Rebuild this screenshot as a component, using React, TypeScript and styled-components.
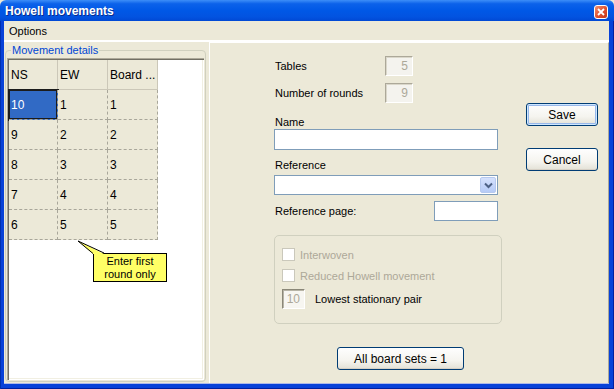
import React from "react";
import styled, { createGlobalStyle } from "styled-components";

const GlobalStyle = createGlobalStyle`
  html, body {
    margin: 0;
    padding: 0;
    overflow: hidden;
    background: #ECE9D8;
  }
  * {
    box-sizing: border-box;
  }
`;

const Window = styled.div`
  width: 614px;
  height: 389px;
  display: flex;
  flex-direction: column;
  font-family: "Liberation Sans", Arial, sans-serif;
  font-size: 11px;
  color: #000;
`;

const TitleBar = styled.div`
  height: 21px;
  display: flex;
  align-items: center;
  justify-content: space-between;
  padding: 0 6px 0 5px;
  background: linear-gradient(
    #3d8ef8 0%,
    #0c62ea 18%,
    #0058e6 50%,
    #0253e0 80%,
    #0048d4 100%
  );
  border-radius: 6px 6px 0 0;
`;

const Title = styled.span`
  color: #fff;
  font-weight: bold;
  font-size: 12px;
  text-shadow: 1px 1px 0 #0a2c8c;
`;

const CloseButton = styled.div`
  width: 14px;
  height: 14px;
  margin-top: 2px;
  border: 1px solid #fff;
  border-radius: 3px;
  background: linear-gradient(135deg, #f09070 0%, #e0502e 55%, #c0381c 100%);
  display: flex;
  align-items: center;
  justify-content: center;
`;

const Frame = styled.div`
  flex: 1;
  display: flex;
  flex-direction: column;
  background: #0842d8;
  border-left: 1px solid #0030b0;
  border-right: 1px solid #0020a0;
  padding: 0 4px 5px 3px;
  box-shadow: inset 0 -1px 0 #0020a0;
`;

const Client = styled.div`
  flex: 1;
  display: flex;
  flex-direction: column;
  background: #ece9d8;
  border-bottom: 1px solid #aeb9e8;
`;

const MenuBar = styled.div`
  height: 21px;
  display: flex;
  align-items: center;
  padding-left: 5px;
  font-size: 11px;
  border-bottom: 2px solid #fff;
`;

const Body = styled.div`
  flex: 1;
  display: flex;
`;

const LeftPane = styled.fieldset`
  margin: 1px 0 1px 1px;
  width: 201px;
  border: 1px solid #d0d0bf;
  border-radius: 4px;
  display: flex;
  flex-direction: column;
  padding: 0 1px 1px 1px;
`;

const Legend = styled.legend`
  color: #0046d5;
  font-size: 11px;
  padding: 0 1px;
  margin-left: 4px;
  line-height: 14px;
`;

const GridBox = styled.div`
  position: relative;
  flex: 1;
  background: #fff;
  box-shadow: inset 1px 1px 0 #aca899, inset 2px 2px 0 #716f64,
    inset -1px -1px 0 #fff, inset -2px -2px 0 #f1efe2;
  padding: 2px;
  margin-top: 1px;
`;

const Table = styled.div`
  display: grid;
  grid-template-columns: 49px 50px 50px;
  grid-auto-rows: 30px;
  width: 149px;
`;

const HeaderCell = styled.div`
  background: #ece9d8;
  border-right: 1px solid #cbc7b8;
  border-bottom: 1px solid #cbc7b8;
  display: flex;
  align-items: center;
  padding-left: 2px;
  font-size: 12px;
  white-space: nowrap;
  overflow: hidden;
`;

const Cell = styled.div<{ $selected?: boolean }>`
  background: ${(p) => (p.$selected ? "#316ac5" : "#ece9d8")};
  color: ${(p) => (p.$selected ? "#fff" : "#000")};
  border-right: 1px dashed #a8a69a;
  border-bottom: 1px dashed #a8a69a;
  box-shadow: ${(p) => (p.$selected ? "0 0 0 1px #1c1c1c, inset 0 0 0 1px #1c1c1c" : "none")};
  position: relative;
  display: flex;
  align-items: center;
  padding-left: 2px;
  font-size: 12px;
`;

const Callout = styled.div`
  position: absolute;
  left: 86px;
  top: 195px;
  width: 74px;
  height: 29px;
  background: #ffff66;
  border: 1px solid #000;
  display: flex;
  flex-direction: column;
  align-items: center;
  justify-content: center;
  font-size: 11px;
  line-height: 13px;
`;

const CalloutTail = styled.svg`
  position: absolute;
  left: 70px;
  top: 182px;
  overflow: visible;
`;

const RightPane = styled.div`
  flex: 1;
  display: flex;
  margin-left: 3px;
  border-left: 1px solid #fff;
  border-top: 1px solid #fff;
  border-right: 1px solid #aca899;
  padding: 13px 0 0 64px;
`;

const Form = styled.div`
  width: 228px;
  display: flex;
  flex-direction: column;
`;

const Row = styled.div<{ $top?: number; $width?: number }>`
  display: flex;
  align-items: center;
  justify-content: space-between;
  height: 20px;
  width: ${(p) => p.$width ?? 139}px;
  margin-top: ${(p) => p.$top ?? 0}px;
`;

const Label = styled.div<{ $top?: number; $muted?: boolean }>`
  font-size: 11px;
  line-height: 14px;
  padding-left: 1px;
  margin-top: ${(p) => p.$top ?? 0}px;
  color: ${(p) => (p.$muted ? "#aca899" : "#000")};
  white-space: nowrap;
`;

const SunkenBox = styled.div<{ $width: number }>`
  width: ${(p) => p.$width}px;
  height: 20px;
  background: #f4f3ee;
  border-top: 1px solid #aca899;
  border-left: 1px solid #aca899;
  border-right: 1px solid #fff;
  border-bottom: 1px solid #fff;
  box-shadow: inset 1px 1px 0 #dad7ca;
  color: #aca899;
  font-size: 12px;
  text-align: right;
  padding-right: 4px;
  line-height: 18px;
`;

const DeepBox = styled(SunkenBox)`
  border-top: 1px solid #8a8778;
  border-left: 1px solid #8a8778;
  box-shadow: inset 1px 1px 0 #b7b4a6;
  background: #f7f6f1;
`;

const TextInput = styled.div<{ $width: number; $height?: number; $top?: number }>`
  width: ${(p) => p.$width}px;
  height: ${(p) => p.$height ?? 20}px;
  margin-top: ${(p) => p.$top ?? 0}px;
  background: #fff;
  border: 1px solid #7f9db9;
  display: flex;
  justify-content: flex-end;
  align-items: center;
  padding-right: 1px;
`;

const DropButton = styled.div`
  width: 16px;
  height: 16px;
  border-radius: 2px;
  background: linear-gradient(#d5e1fd, #b6cbf7);
  border: 1px solid #b6c9ef;
  display: flex;
  align-items: center;
  justify-content: center;
`;

const OptionsGroup = styled.div`
  margin-top: 14px;
  width: 228px;
  height: 89px;
  border: 1px solid #d0d0bf;
  border-radius: 5px;
  padding: 12px 0 0 7px;
  display: flex;
  flex-direction: column;
`;

const CheckRow = styled.div<{ $top?: number }>`
  display: flex;
  align-items: center;
  gap: 4px;
  height: 13px;
  margin-top: ${(p) => p.$top ?? 0}px;
`;

const CheckBox = styled.div`
  width: 13px;
  height: 13px;
  border: 1px solid #cac8bb;
  background: #fff;
`;

const PairRow = styled.div`
  display: flex;
  align-items: center;
  gap: 9px;
  margin-top: 7px;
`;

const PushButton = styled.div<{ $default?: boolean; $width: number; $top?: number; $left?: number }>`
  width: ${(p) => p.$width}px;
  height: 23px;
  margin-top: ${(p) => p.$top ?? 0}px;
  margin-left: ${(p) => p.$left ?? 0}px;
  border: 1px solid #003c74;
  border-radius: 3px;
  background: linear-gradient(#fefefe 0%, #f5f4ef 60%, #e3e1d6 100%);
  box-shadow: ${(p) =>
    p.$default
      ? "inset 0 0 0 1px #cee7ff, inset 0 0 0 2px #98b8ea"
      : "inset 0 -1px 0 #d6d0c5"};
  display: flex;
  align-items: center;
  justify-content: center;
  font-size: 12px;
`;

const ButtonColumn = styled.div`
  display: flex;
  flex-direction: column;
  margin-left: 24px;
  padding-top: 47px;
`;

const rows = [
  ["10", "1", "1"],
  ["9", "2", "2"],
  ["8", "3", "3"],
  ["7", "4", "4"],
  ["6", "5", "5"],
];

export default function App() {
  return (
    <>
      <GlobalStyle />
      <Window>
        <TitleBar>
          <Title>Howell movements</Title>
          <CloseButton>
            <svg width="8" height="8" viewBox="0 0 8 8">
              <path d="M1 1 L7 7 M7 1 L1 7" stroke="#fff" strokeWidth="1.8" />
            </svg>
          </CloseButton>
        </TitleBar>
        <Frame>
          <Client>
            <MenuBar>Options</MenuBar>
            <Body>
              <LeftPane>
                <Legend>Movement details</Legend>
                <GridBox>
                  <Table>
                    <HeaderCell>NS</HeaderCell>
                    <HeaderCell>EW</HeaderCell>
                    <HeaderCell>Board ...</HeaderCell>
                    {rows.map((r, i) =>
                      r.map((v, j) => (
                        <Cell key={`${i}-${j}`} $selected={i === 0 && j === 0}>
                          {v}
                        </Cell>
                      ))
                    )}
                  </Table>
                  <Callout>
                    <span>Enter first</span>
                    <span>round only</span>
                  </Callout>
                  <CalloutTail width="36" height="16">
                    <polygon points="1,1 16,14 27,14" fill="#ffff66" />
                    <polyline points="16,13.5 1,1 27,13" fill="none" stroke="#000" strokeWidth="1" />
                  </CalloutTail>
                </GridBox>
              </LeftPane>
              <RightPane>
                <Form>
                  <Row>
                    <Label>Tables</Label>
                    <SunkenBox $width={28}>5</SunkenBox>
                  </Row>
                  <Row $top={7}>
                    <Label>Number of rounds</Label>
                    <SunkenBox $width={28}>9</SunkenBox>
                  </Row>
                  <Label $top={12}>Name</Label>
                  <TextInput $width={224} $height={21} />
                  <Label $top={8}>Reference</Label>
                  <TextInput $width={224} $top={3}>
                    <DropButton>
                      <svg width="9" height="7" viewBox="0 0 9 7">
                        <path d="M1 1.5 L4.5 5 L8 1.5" fill="none" stroke="#4d6185" strokeWidth="2" />
                      </svg>
                    </DropButton>
                  </TextInput>
                  <Row $top={6} $width={224}>
                    <Label>Reference page:</Label>
                    <TextInput $width={64} />
                  </Row>
                  <OptionsGroup>
                    <CheckRow>
                      <CheckBox />
                      <Label $muted>Interwoven</Label>
                    </CheckRow>
                    <CheckRow $top={8}>
                      <CheckBox />
                      <Label $muted>Reduced Howell movement</Label>
                    </CheckRow>
                    <PairRow>
                      <DeepBox $width={23}>10</DeepBox>
                      <Label>Lowest stationary pair</Label>
                    </PairRow>
                  </OptionsGroup>
                  <PushButton $width={127} $top={23} $left={63}>
                    All board sets = 1
                  </PushButton>
                </Form>
                <ButtonColumn>
                  <PushButton $default $width={72}>Save</PushButton>
                  <PushButton $width={72} $top={22}>Cancel</PushButton>
                </ButtonColumn>
              </RightPane>
            </Body>
          </Client>
        </Frame>
      </Window>
    </>
  );
}
